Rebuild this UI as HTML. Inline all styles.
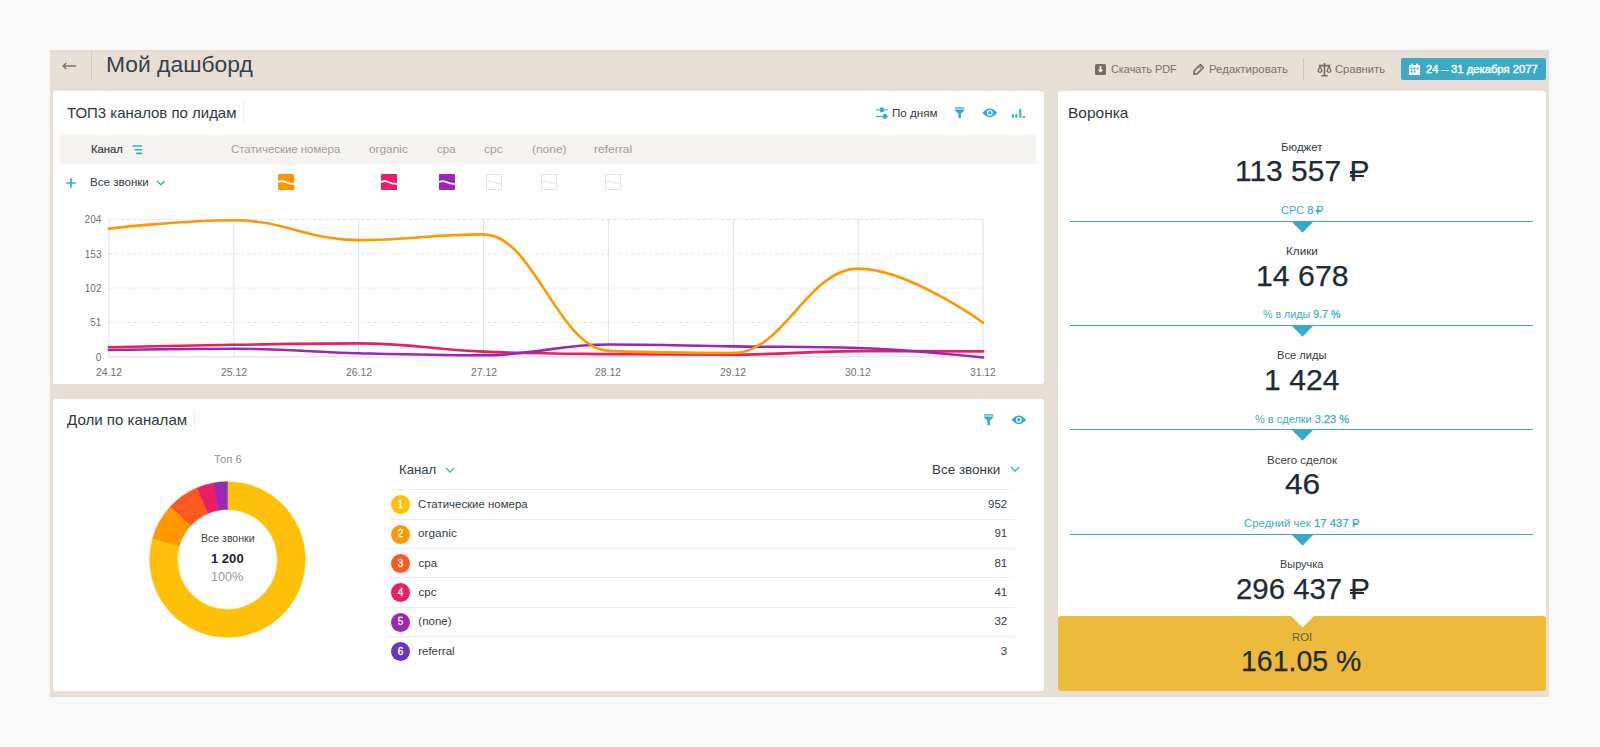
<!DOCTYPE html>
<html><head><meta charset="utf-8">
<style>
*{margin:0;padding:0;box-sizing:border-box}
html,body{width:1600px;height:747px;overflow:hidden;background:#f8f8f8;font-family:"Liberation Sans",sans-serif}
.a{position:absolute}
.t{position:absolute;white-space:nowrap;line-height:1}
</style></head><body>
<div class="a" style="left:50px;top:50px;width:1499px;height:647px;background:#e7dfd6"></div>
<svg class="a" style="left:60px;top:59px" width="20" height="14"><path d="M3.2 7 H16.2 M6.2 4 L3.2 7 L6.2 10" stroke="#7b7167" stroke-width="1.5" fill="none"/></svg>
<div class="a" style="left:91px;top:52px;width:1px;height:29px;background:#d3c8bb"></div>
<div class="t" style="left:105.59px;top:55.20px;font-size:21.5px;color:#36414b;transform:scaleX(1.0625);transform-origin:0 0;">Мой дашборд</div>
<svg class="a" style="left:1095px;top:64px" width="11" height="11"><rect x="0" y="0" width="11" height="11" rx="1.5" fill="#776d60"/><path d="M4.7 2 H6.3 V5.8 H8.3 L5.5 8.6 L2.7 5.8 H4.7 Z" fill="#fff"/></svg>
<div class="t" style="left:1111.13px;top:64.06px;font-size:11.5px;color:#7b7064;transform:scaleX(0.9473);transform-origin:0 0;">Скачать PDF</div>
<svg class="a" style="left:1192px;top:63px" width="13" height="13"><path d="M1.8 11.2 L2.4 7.6 L8.4 1.6 L11.4 4.6 L5.4 10.6 Z" stroke="#776d60" stroke-width="1.6" fill="none" stroke-linejoin="round"/><circle cx="8.4" cy="4.6" r="0.9" fill="#776d60"/></svg>
<div class="t" style="left:1208.61px;top:64.06px;font-size:11.5px;color:#7b7064;transform:scaleX(0.9936);transform-origin:0 0;">Редактировать</div>
<div class="a" style="left:1303px;top:58px;width:1px;height:22px;background:#cfc3b4"></div>
<svg class="a" style="left:1317px;top:62px" width="15" height="15"><path d="M7.5 1 V13.2 M1.8 3.6 H13.2 M4.3 13.7 H10.7" stroke="#776d60" stroke-width="1.6" fill="none"/><path d="M3 4 L1 9.2 Q3 11.4 5 9.2 Z M12 4 L10 9.2 Q12 11.4 14 9.2 Z" stroke="#776d60" stroke-width="1.2" fill="none"/></svg>
<div class="t" style="left:1335.41px;top:64.06px;font-size:11.5px;color:#7b7064;transform:scaleX(0.9780);transform-origin:0 0;">Сравнить</div>
<div class="a" style="left:1401px;top:58px;width:145px;height:22px;background:#3aaac8;border-radius:2px"></div>
<svg class="a" style="left:1409px;top:63px" width="11" height="12"><path d="M0 2 H11 V12 H0 Z" fill="#fff"/><rect x="2.3" y="0.6" width="1.6" height="2.4" fill="#fff"/><rect x="7.1" y="0.6" width="1.6" height="2.4" fill="#fff"/><g fill="#3aaac8"><rect x="1.6" y="4.6" width="1.9" height="1.9"/><rect x="4.6" y="4.6" width="1.9" height="1.9"/><rect x="7.6" y="4.6" width="1.9" height="1.9"/><rect x="1.6" y="7.6" width="1.9" height="1.9"/><rect x="4.6" y="7.6" width="1.9" height="1.9"/></g></svg>
<div class="t" style="left:1425.91px;top:64.36px;font-size:11.5px;color:#fff;transform:scaleX(0.9779);transform-origin:0 0;-webkit-text-stroke:0.45px #fff">24 – 31 декабря 2077</div>
<div class="a" style="left:53px;top:91px;width:991px;height:293px;background:#fff;border-radius:3px"></div>
<div class="t" style="left:67.20px;top:105.10px;font-size:15px;color:#2f3840;transform:scaleX(0.9976);transform-origin:0 0;">ТОП3 каналов по лидам</div>
<div class="a" style="left:243px;top:102px;width:1px;height:21px;background:#e8eef1"></div>
<svg class="a" style="left:875px;top:106px" width="14" height="14"><path d="M1 3.8 H13" stroke="#3aaac8" stroke-width="1.4" opacity="0.75"/><rect x="5" y="1.4" width="3.8" height="4.8" rx="1" fill="#3aaac8"/><path d="M1 10.5 H13" stroke="#3aaac8" stroke-width="1.3"/><rect x="8" y="8" width="3.8" height="4.8" rx="1" fill="#3aaac8"/></svg>
<div class="t" style="left:892.25px;top:107.69px;font-size:11px;color:#333b44;transform:scaleX(1.0580);transform-origin:0 0;">По дням</div>
<svg class="a" style="left:955px;top:107px" width="10" height="12"><rect x="0" y="0" width="9.3" height="1.8" fill="#3aaac8" opacity="0.7"/><path d="M0 2.6 H9.3 V3.6 L5.9 6.8 V11.3 H3.4 V6.8 L0 3.6 Z" fill="#3aaac8"/></svg>
<svg class="a" style="left:981.5px;top:108.3px" width="16" height="10"><path d="M0.4 4.8 Q7.8 -4 15.2 4.8 Q7.8 13.6 0.4 4.8 Z" fill="#3aaac8"/><circle cx="7.8" cy="4.8" r="2.9" fill="#fff"/><circle cx="7.8" cy="4.8" r="1.7" fill="#3aaac8"/></svg>
<svg class="a" style="left:1011px;top:108px" width="15" height="10"><rect x="0.8" y="6.2" width="2" height="3.6" fill="#3aaac8"/><rect x="4.3" y="6.2" width="2" height="3.6" fill="#3aaac8"/><rect x="8.3" y="0.8" width="2" height="9" fill="#3aaac8"/><rect x="11.8" y="7.8" width="2.2" height="2" fill="#3aaac8"/></svg>
<div class="a" style="left:60px;top:135px;width:976px;height:29px;background:#f5f3ef;border-radius:2px"></div>
<div class="t" style="left:91.08px;top:143.89px;font-size:11px;color:#333b44;transform:scaleX(1.0169);transform-origin:0 0;-webkit-text-stroke:0.2px #333b44">Канал</div>
<svg class="a" style="left:132px;top:144px" width="11" height="11"><path d="M1 2 H9.4 M3 5.8 H9.4 M4.8 9.4 H9.4" stroke="#3aaac8" stroke-width="1.6" stroke-linecap="round"/></svg>
<div class="t" style="left:230.73px;top:144.19px;font-size:11px;color:#a39d97;transform:scaleX(1.0357);transform-origin:0 0;">Статические номера</div>
<svg class="a" style="left:277.6px;top:174.4px" width="16" height="16"><rect width="16" height="16" rx="0.8" fill="#ff9800"/><path d="M0 7.9 C2.5 7.1 4.5 6.9 6.5 7.7 C9 8.9 12 9.9 16 9.8" stroke="#fff" stroke-width="1.7" fill="none"/></svg>
<div class="t" style="left:369.46px;top:144.19px;font-size:11px;color:#a39d97;transform:scaleX(1.0765);transform-origin:0 0;">organic</div>
<svg class="a" style="left:381.0px;top:174.4px" width="16" height="16"><rect width="16" height="16" rx="0.8" fill="#e91e63"/><path d="M0 7.9 C2.5 7.1 4.5 6.9 6.5 7.7 C9 8.9 12 9.9 16 9.8" stroke="#fff" stroke-width="1.7" fill="none"/></svg>
<div class="t" style="left:436.98px;top:144.19px;font-size:11px;color:#a39d97;transform:scaleX(1.0465);transform-origin:0 0;">cpa</div>
<svg class="a" style="left:438.5px;top:174.4px" width="16" height="16"><rect width="16" height="16" rx="0.8" fill="#9c27b0"/><path d="M0 7.9 C2.5 7.1 4.5 6.9 6.5 7.7 C9 8.9 12 9.9 16 9.8" stroke="#fff" stroke-width="1.7" fill="none"/></svg>
<div class="t" style="left:484.45px;top:144.19px;font-size:11px;color:#a39d97;transform:scaleX(1.1043);transform-origin:0 0;">cpc</div>
<svg class="a" style="left:486.0px;top:174.3px" width="16" height="16"><rect x="0.5" y="0.5" width="15" height="15" fill="none" stroke="#e3e3e3"/><path d="M0.5 7.9 C2.5 7.1 4.5 6.9 6.5 7.7 C9 8.9 12 9.9 15.5 9.8" stroke="#e3e3e3" stroke-width="1" fill="none"/></svg>
<div class="t" style="left:531.74px;top:144.19px;font-size:11px;color:#a39d97;transform:scaleX(1.0855);transform-origin:0 0;">(none)</div>
<svg class="a" style="left:541.0px;top:174.3px" width="16" height="16"><rect x="0.5" y="0.5" width="15" height="15" fill="none" stroke="#e3e3e3"/><path d="M0.5 7.9 C2.5 7.1 4.5 6.9 6.5 7.7 C9 8.9 12 9.9 15.5 9.8" stroke="#e3e3e3" stroke-width="1" fill="none"/></svg>
<div class="t" style="left:593.74px;top:144.19px;font-size:11px;color:#a39d97;transform:scaleX(1.0928);transform-origin:0 0;">referral</div>
<svg class="a" style="left:604.8px;top:174.3px" width="16" height="16"><rect x="0.5" y="0.5" width="15" height="15" fill="none" stroke="#e3e3e3"/><path d="M0.5 7.9 C2.5 7.1 4.5 6.9 6.5 7.7 C9 8.9 12 9.9 15.5 9.8" stroke="#e3e3e3" stroke-width="1" fill="none"/></svg>
<svg class="a" style="left:65px;top:177px" width="12" height="12"><path d="M6 1.2 V10.8 M1.2 6 H10.8" stroke="#3aaac8" stroke-width="1.7"/></svg>
<div class="t" style="left:89.95px;top:177.39px;font-size:11px;color:#333b44;transform:scaleX(1.0516);transform-origin:0 0;">Все звонки</div>
<svg class="a" style="left:155.5px;top:179.5px" width="10" height="7"><path d="M1 1 L4.8 4.8 L8.6 1" stroke="#3aaac8" stroke-width="1.3" fill="none"/></svg>
<svg class="a" style="left:0;top:0" width="1600" height="747"><path d="M108.9 219.40 H983.13" stroke="#e6e6e6" stroke-width="1" stroke-dasharray="4,2"/><path d="M108.9 253.78 H983.13" stroke="#e6e6e6" stroke-width="1" stroke-dasharray="4,2"/><path d="M108.9 288.15 H983.13" stroke="#e6e6e6" stroke-width="1" stroke-dasharray="4,2"/><path d="M108.9 322.52 H983.13" stroke="#e6e6e6" stroke-width="1" stroke-dasharray="4,2"/><path d="M108.90 219.4 V356.9" stroke="#e3e3e3" stroke-width="1.1"/><path d="M233.79 219.4 V356.9" stroke="#e3e3e3" stroke-width="1.1"/><path d="M358.68 219.4 V356.9" stroke="#e3e3e3" stroke-width="1.1"/><path d="M483.57 219.4 V356.9" stroke="#e3e3e3" stroke-width="1.1"/><path d="M608.46 219.4 V356.9" stroke="#e3e3e3" stroke-width="1.1"/><path d="M733.35 219.4 V356.9" stroke="#e3e3e3" stroke-width="1.1"/><path d="M858.24 219.4 V356.9" stroke="#e3e3e3" stroke-width="1.1"/><path d="M983.13 219.4 V356.9" stroke="#e3e3e3" stroke-width="1.1"/><path d="M108.9 356.9 H983.13" stroke="#e3e3e3" stroke-width="1.3"/><path d="M 108.90 347.20 C 108.90 347.20 183.83 345.56 233.79 344.80 C 283.75 344.04 308.72 343.40 358.68 343.40 C 408.64 343.40 433.61 349.46 483.57 351.60 C 533.53 353.74 558.50 353.60 608.46 354.10 C 658.42 354.60 683.39 354.60 733.35 354.60 C 783.31 354.60 808.28 351.10 858.24 351.10 C 908.20 351.10 983.13 351.40 983.13 351.40" stroke="#e91e63" stroke-width="2.6" fill="none" stroke-linecap="round"/><path d="M 108.90 350.00 C 108.90 350.00 183.83 348.70 233.79 348.70 C 283.75 348.70 308.72 351.88 358.68 353.20 C 408.64 354.52 433.61 355.30 483.57 355.30 C 533.53 355.30 558.50 344.50 608.46 344.50 C 658.42 344.50 683.39 345.70 733.35 346.40 C 783.31 347.10 808.28 346.40 858.24 348.00 C 908.20 349.60 983.13 357.50 983.13 357.50" stroke="#9c27b0" stroke-width="2.6" fill="none" stroke-linecap="round"/><path d="M 108.90 228.60 C 108.90 228.60 183.83 220.20 233.79 220.20 C 283.75 220.20 308.72 240.10 358.68 240.10 C 408.64 240.10 433.61 234.35 483.57 234.35 C 533.53 234.35 558.50 348.70 608.46 350.85 C 658.42 353.00 683.39 353.00 733.35 353.00 C 783.31 353.00 808.28 268.65 858.24 268.65 C 908.20 268.65 983.13 322.70 983.13 322.70" stroke="#ff9800" stroke-width="2.6" fill="none" stroke-linecap="round"/></svg>
<div class="t" style="left:84.60px;top:215.13px;font-size:10px;color:#707070;">204</div>
<div class="t" style="left:84.80px;top:249.51px;font-size:10px;color:#707070;">153</div>
<div class="t" style="left:84.80px;top:283.88px;font-size:10px;color:#707070;">102</div>
<div class="t" style="left:90.30px;top:318.26px;font-size:10px;color:#707070;">51</div>
<div class="t" style="left:95.80px;top:352.63px;font-size:10px;color:#707070;">0</div>
<div class="t" style="left:95.88px;top:367.93px;font-size:10px;color:#707070;transform:scaleX(1.0373);transform-origin:0 0;">24.12</div>
<div class="t" style="left:220.77px;top:367.93px;font-size:10px;color:#707070;transform:scaleX(1.0373);transform-origin:0 0;">25.12</div>
<div class="t" style="left:345.66px;top:367.93px;font-size:10px;color:#707070;transform:scaleX(1.0373);transform-origin:0 0;">26.12</div>
<div class="t" style="left:470.55px;top:367.93px;font-size:10px;color:#707070;transform:scaleX(1.0373);transform-origin:0 0;">27.12</div>
<div class="t" style="left:595.44px;top:367.93px;font-size:10px;color:#707070;transform:scaleX(1.0373);transform-origin:0 0;">28.12</div>
<div class="t" style="left:720.33px;top:367.93px;font-size:10px;color:#707070;transform:scaleX(1.0373);transform-origin:0 0;">29.12</div>
<div class="t" style="left:845.33px;top:367.93px;font-size:10px;color:#707070;transform:scaleX(1.0331);transform-origin:0 0;">30.12</div>
<div class="t" style="left:970.22px;top:367.93px;font-size:10px;color:#707070;transform:scaleX(1.0331);transform-origin:0 0;">31.12</div>
<div class="a" style="left:53px;top:399px;width:991px;height:292px;background:#fff;border-radius:3px"></div>
<div class="t" style="left:66.90px;top:412.10px;font-size:15px;color:#2f3840;transform:scaleX(1.0051);transform-origin:0 0;">Доли по каналам</div>
<div class="a" style="left:194px;top:410px;width:1px;height:21px;background:#e8eef1"></div>
<svg class="a" style="left:984px;top:414px" width="10" height="12"><rect x="0" y="0" width="9.3" height="1.8" fill="#3aaac8" opacity="0.7"/><path d="M0 2.6 H9.3 V3.6 L5.9 6.8 V11.3 H3.4 V6.8 L0 3.6 Z" fill="#3aaac8"/></svg>
<svg class="a" style="left:1010.5px;top:415.3px" width="16" height="10"><path d="M0.4 4.8 Q7.8 -4 15.2 4.8 Q7.8 13.6 0.4 4.8 Z" fill="#3aaac8"/><circle cx="7.8" cy="4.8" r="2.9" fill="#fff"/><circle cx="7.8" cy="4.8" r="1.7" fill="#3aaac8"/></svg>
<div class="t" style="left:214.39px;top:453.59px;font-size:11px;color:#8f8f8f;transform:scaleX(1.0265);transform-origin:0 0;">Топ 6</div>
<svg class="a" style="left:0;top:0" width="1600" height="747"><path d="M227.45 481.70 A77.8 77.8 0 1 1 152.52 538.58 L179.29 546.05 A50 50 0 1 0 227.45 509.50 Z" fill="#ffc107" stroke="#ffc107" stroke-width="0.5"/><path d="M152.52 538.58 A77.8 77.8 0 0 1 170.46 506.54 L190.82 525.46 A50 50 0 0 0 179.29 546.05 Z" fill="#ff9800" stroke="#ff9800" stroke-width="0.5"/><path d="M170.46 506.54 A77.8 77.8 0 0 1 197.30 487.78 L208.07 513.41 A50 50 0 0 0 190.82 525.46 Z" fill="#ff5722" stroke="#ff5722" stroke-width="0.5"/><path d="M197.30 487.78 A77.8 77.8 0 0 1 213.27 483.00 L218.34 510.34 A50 50 0 0 0 208.07 513.41 Z" fill="#e91e63" stroke="#e91e63" stroke-width="0.5"/><path d="M213.27 483.00 A77.8 77.8 0 0 1 226.23 481.71 L226.66 509.51 A50 50 0 0 0 218.34 510.34 Z" fill="#9c27b0" stroke="#9c27b0" stroke-width="0.5"/><path d="M226.23 481.71 A77.8 77.8 0 0 1 227.45 481.70 L227.45 509.50 A50 50 0 0 0 226.66 509.51 Z" fill="#673ab7" stroke="#673ab7" stroke-width="0.5"/></svg>
<div class="t" style="left:200.56px;top:534.03px;font-size:10px;color:#3a3f45;transform:scaleX(1.0526);transform-origin:0 0;">Все звонки</div>
<div class="t" style="left:210.94px;top:552.84px;font-size:12px;color:#1f262d;transform:scaleX(1.0865);transform-origin:0 0;font-weight:bold;">1 200</div>
<div class="t" style="left:211.05px;top:571.04px;font-size:12px;color:#9a9a9a;transform:scaleX(1.0544);transform-origin:0 0;">100%</div>
<div class="t" style="left:398.60px;top:463.54px;font-size:12px;color:#333b44;transform:scaleX(1.0963);transform-origin:0 0;">Канал</div>
<svg class="a" style="left:445px;top:466.5px" width="11" height="7"><path d="M1 1 L5 5 L9 1" stroke="#3aaac8" stroke-width="1.3" fill="none"/></svg>
<div class="t" style="left:931.68px;top:463.74px;font-size:12px;color:#333b44;transform:scaleX(1.1199);transform-origin:0 0;">Все звонки</div>
<svg class="a" style="left:1009.8px;top:466px" width="11" height="7"><path d="M1 1 L5 5 L9 1" stroke="#3aaac8" stroke-width="1.3" fill="none"/></svg>
<div class="a" style="left:388px;top:489.30px;width:627px;height:1px;background:#ededed"></div>
<div class="a" style="left:391px;top:495.20px;width:19px;height:19px;border-radius:50%;background:#ffc107"></div>
<div class="t" style="left:397.55px;top:499.83px;font-size:10px;color:#fff;-webkit-text-stroke:0.3px #fff">1</div>
<div class="t" style="left:418.40px;top:498.86px;font-size:11.5px;color:#333b44;transform:scaleX(0.9936);transform-origin:0 0;">Статические номера</div>
<div class="t" style="left:988.00px;top:498.86px;font-size:11.5px;color:#333b44;">952</div>
<div class="a" style="left:388px;top:518.65px;width:627px;height:1px;background:#ededed"></div>
<div class="a" style="left:391px;top:524.55px;width:19px;height:19px;border-radius:50%;background:#ff9800"></div>
<div class="t" style="left:397.70px;top:529.18px;font-size:10px;color:#fff;-webkit-text-stroke:0.3px #fff">2</div>
<div class="t" style="left:418.49px;top:528.21px;font-size:11.5px;color:#333b44;transform:scaleX(1.0298);transform-origin:0 0;">organic</div>
<div class="t" style="left:994.40px;top:528.21px;font-size:11.5px;color:#333b44;">91</div>
<div class="a" style="left:388px;top:548.00px;width:627px;height:1px;background:#ededed"></div>
<div class="a" style="left:391px;top:553.90px;width:19px;height:19px;border-radius:50%;background:#ff5722"></div>
<div class="t" style="left:397.75px;top:558.53px;font-size:10px;color:#fff;-webkit-text-stroke:0.3px #fff">3</div>
<div class="t" style="left:418.50px;top:557.56px;font-size:11.5px;color:#333b44;">cpa</div>
<div class="t" style="left:994.40px;top:557.56px;font-size:11.5px;color:#333b44;">81</div>
<div class="a" style="left:388px;top:577.35px;width:627px;height:1px;background:#ededed"></div>
<div class="a" style="left:391px;top:583.25px;width:19px;height:19px;border-radius:50%;background:#e91e63"></div>
<div class="t" style="left:397.75px;top:587.88px;font-size:10px;color:#fff;-webkit-text-stroke:0.3px #fff">4</div>
<div class="t" style="left:418.50px;top:586.91px;font-size:11.5px;color:#333b44;">cpc</div>
<div class="t" style="left:994.40px;top:586.91px;font-size:11.5px;color:#333b44;">41</div>
<div class="a" style="left:388px;top:606.70px;width:627px;height:1px;background:#ededed"></div>
<div class="a" style="left:391px;top:612.60px;width:19px;height:19px;border-radius:50%;background:#9c27b0"></div>
<div class="t" style="left:397.70px;top:617.23px;font-size:10px;color:#fff;-webkit-text-stroke:0.3px #fff">5</div>
<div class="t" style="left:418.30px;top:616.26px;font-size:11.5px;color:#333b44;">(none)</div>
<div class="t" style="left:994.40px;top:616.26px;font-size:11.5px;color:#333b44;">32</div>
<div class="a" style="left:388px;top:636.05px;width:627px;height:1px;background:#ededed"></div>
<div class="a" style="left:391px;top:641.95px;width:19px;height:19px;border-radius:50%;background:#673ab7"></div>
<div class="t" style="left:397.70px;top:646.58px;font-size:10px;color:#fff;-webkit-text-stroke:0.3px #fff">6</div>
<div class="t" style="left:418.20px;top:645.61px;font-size:11.5px;color:#333b44;">referral</div>
<div class="t" style="left:1000.70px;top:645.61px;font-size:11.5px;color:#333b44;">3</div>
<div class="a" style="left:1058px;top:91px;width:488px;height:600px;background:#fff;border-radius:3px"></div>
<div class="t" style="left:1068.16px;top:105.30px;font-size:15px;color:#2f3840;transform:scaleX(1.0331);transform-origin:0 0;">Воронка</div>
<div class="t" style="left:1281.01px;top:141.69px;font-size:11px;color:#333b44;transform:scaleX(1.0438);transform-origin:0 0;">Бюджет</div>
<div class="t" style="left:1234.98px;top:157.45px;font-size:29px;color:#1f2a33;transform:scaleX(1.0333);transform-origin:0 0;-webkit-text-stroke:0.25px #1f2a33">113 557 Р</div>
<div class="a" style="left:1349.52px;top:174.85px;width:14.25px;height:2.32px;background:#1f2a33"></div>
<div class="a" style="left:1349.52px;top:171.46px;width:3.77px;height:2.32px;background:#1f2a33"></div>
<div class="t" style="left:1280.93px;top:205.01px;font-size:10.5px;color:#3aaac8;transform:scaleX(1.0427);transform-origin:0 0;">CPC <span style="-webkit-text-stroke:0.25px #3aaac8">8 Р</span></div>
<div class="a" style="left:1316.27px;top:211.23px;width:5.22px;height:1.00px;background:#3aaac8"></div>
<div class="a" style="left:1316.27px;top:210.00px;width:1.36px;height:1.00px;background:#3aaac8"></div>
<div class="a" style="left:1070px;top:220.80px;width:463px;height:1px;background:#3aaac8"></div>
<svg class="a" style="left:1290.5px;top:220.80px" width="23" height="13"><path d="M0 0 H23 L11.5 11.8 Z" fill="#3aaac8"/></svg>
<div class="t" style="left:1286.19px;top:245.99px;font-size:11px;color:#333b44;transform:scaleX(1.0636);transform-origin:0 0;">Клики</div>
<div class="t" style="left:1255.70px;top:261.75px;font-size:29px;color:#1f2a33;transform:scaleX(1.0434);transform-origin:0 0;-webkit-text-stroke:0.25px #1f2a33">14 678</div>
<div class="t" style="left:1263.49px;top:309.31px;font-size:10.5px;color:#3aaac8;transform:scaleX(1.0159);transform-origin:0 0;">% в лиды <span style="-webkit-text-stroke:0.25px #3aaac8">9.7 %</span></div>
<div class="a" style="left:1070px;top:325.10px;width:463px;height:1px;background:#3aaac8"></div>
<svg class="a" style="left:1290.5px;top:325.10px" width="23" height="13"><path d="M0 0 H23 L11.5 11.8 Z" fill="#3aaac8"/></svg>
<div class="t" style="left:1277.39px;top:350.29px;font-size:11px;color:#333b44;transform:scaleX(1.0106);transform-origin:0 0;">Все лиды</div>
<div class="t" style="left:1264.06px;top:366.05px;font-size:29px;color:#1f2a33;transform:scaleX(1.0403);transform-origin:0 0;-webkit-text-stroke:0.25px #1f2a33">1 424</div>
<div class="t" style="left:1255.13px;top:413.61px;font-size:10.5px;color:#3aaac8;transform:scaleX(1.0471);transform-origin:0 0;">% в сделки <span style="-webkit-text-stroke:0.25px #3aaac8">3.23 %</span></div>
<div class="a" style="left:1070px;top:429.40px;width:463px;height:1px;background:#3aaac8"></div>
<svg class="a" style="left:1290.5px;top:429.40px" width="23" height="13"><path d="M0 0 H23 L11.5 11.8 Z" fill="#3aaac8"/></svg>
<div class="t" style="left:1266.76px;top:454.59px;font-size:11px;color:#333b44;transform:scaleX(1.0439);transform-origin:0 0;">Всего сделок</div>
<div class="t" style="left:1285.19px;top:470.35px;font-size:29px;color:#1f2a33;transform:scaleX(1.0924);transform-origin:0 0;-webkit-text-stroke:0.25px #1f2a33">46</div>
<div class="t" style="left:1244.41px;top:517.91px;font-size:10.5px;color:#3aaac8;transform:scaleX(1.0853);transform-origin:0 0;">Средний чек <span style="-webkit-text-stroke:0.25px #3aaac8">17 437 Р</span></div>
<div class="a" style="left:1352.53px;top:524.13px;width:5.40px;height:1.00px;background:#3aaac8"></div>
<div class="a" style="left:1352.53px;top:522.90px;width:1.36px;height:1.00px;background:#3aaac8"></div>
<div class="a" style="left:1070px;top:533.70px;width:463px;height:1px;background:#3aaac8"></div>
<svg class="a" style="left:1290.5px;top:533.70px" width="23" height="13"><path d="M0 0 H23 L11.5 11.8 Z" fill="#3aaac8"/></svg>
<div class="t" style="left:1280.11px;top:558.89px;font-size:11px;color:#333b44;transform:scaleX(0.9930);transform-origin:0 0;">Выручка</div>
<div class="t" style="left:1235.58px;top:574.65px;font-size:29px;color:#1f2a33;transform:scaleX(1.0131);transform-origin:0 0;-webkit-text-stroke:0.25px #1f2a33">296 437 Р</div>
<div class="a" style="left:1350.08px;top:592.05px;width:14.02px;height:2.32px;background:#1f2a33"></div>
<div class="a" style="left:1350.08px;top:588.66px;width:3.77px;height:2.32px;background:#1f2a33"></div>
<div class="a" style="left:1058px;top:616px;width:488px;height:75px;background:#ecbb3b;border-radius:3px"></div>
<svg class="a" style="left:1290.5px;top:615.5px" width="23" height="13"><path d="M0 0 H23 L11.5 11.5 Z" fill="#fff"/></svg>
<div class="t" style="left:1291.92px;top:632.29px;font-size:11px;color:#655e3a;transform:scaleX(1.0339);transform-origin:0 0;">ROI</div>
<div class="t" style="left:1241.34px;top:647.45px;font-size:29px;color:#1f2a33;transform:scaleX(0.9816);transform-origin:0 0;-webkit-text-stroke:0.25px #1f2a33">161.05 %</div>
</body></html>
